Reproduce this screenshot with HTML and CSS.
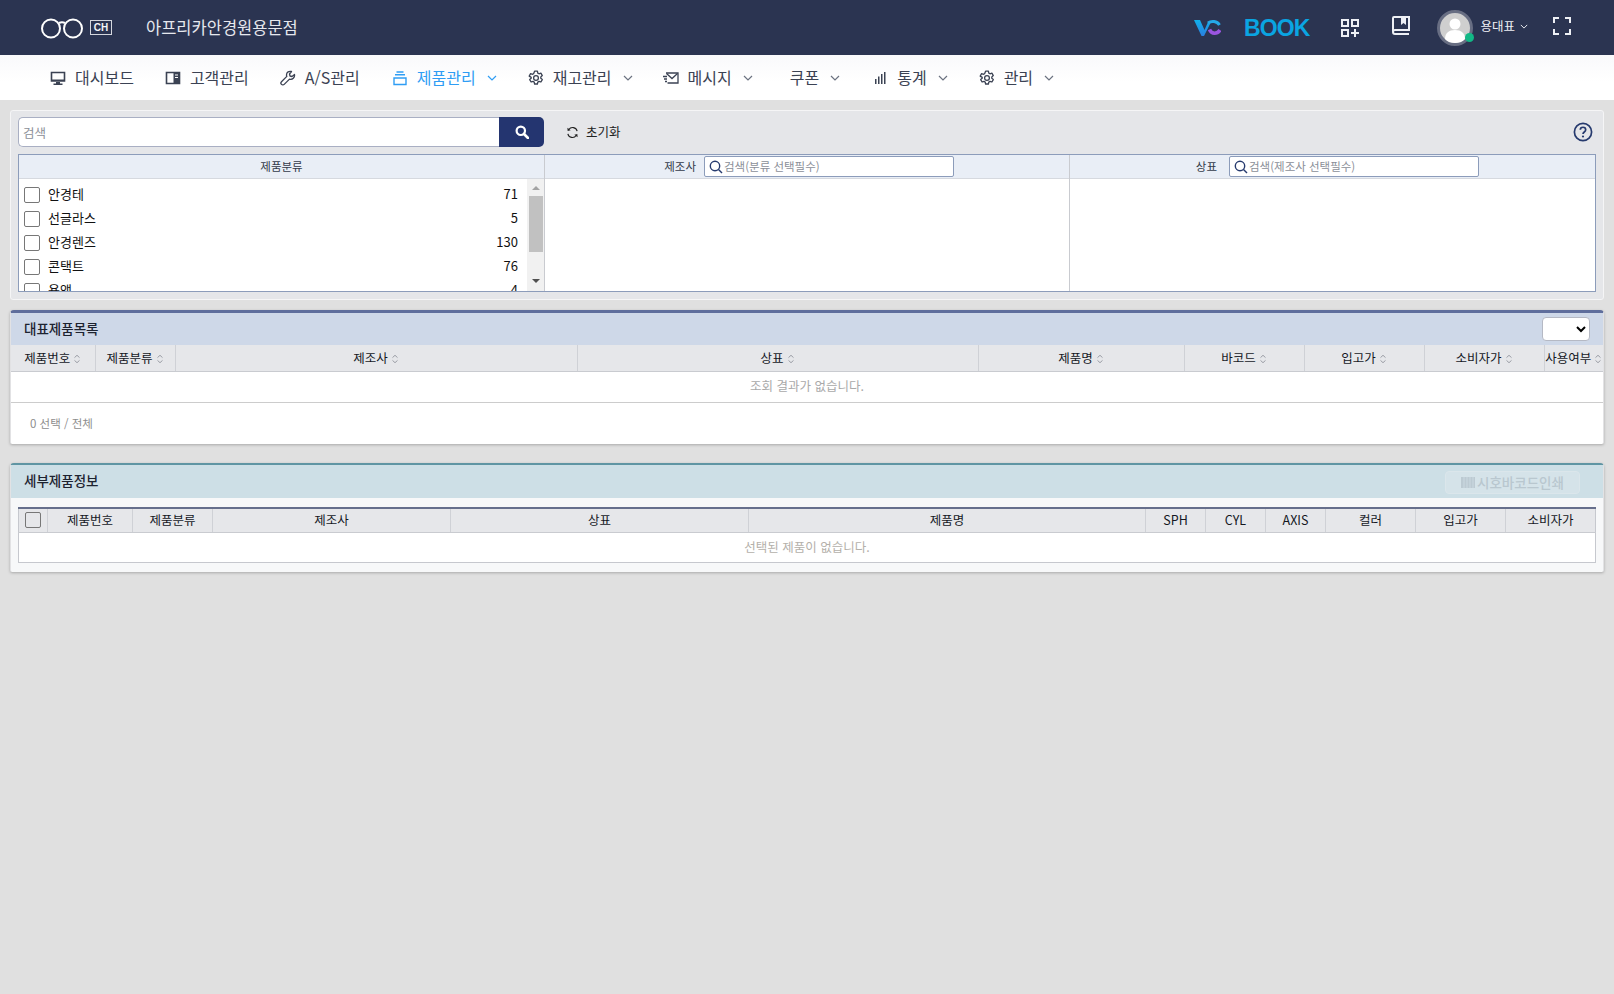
FILE: index.html
```html
<!DOCTYPE html>
<html lang="ko">
<head>
<meta charset="utf-8">
<title>제품관리</title>
<link rel="stylesheet" href="styles.css">
</head>
<body>
<svg class="sprite" aria-hidden="true">
  <symbol id="i-chev" viewBox="0 0 10 6"><path d="M1 1l4 4 4-4" fill="none" stroke="currentColor" stroke-width="1.2"/></symbol>
  <symbol id="i-sort" viewBox="0 0 8 10"><path d="M1.5 3.6L4 1.3l2.5 2.3M1.5 6.4L4 8.7l2.5-2.3" fill="none" stroke="#9a9da5" stroke-width="1"/></symbol>
  <symbol id="i-gear" viewBox="0 0 16 16"><g fill="none" stroke="currentColor" stroke-width="1.3"><path d="M6.6 1.2h2.8l.4 1.9 1.2.7 1.9-.6 1.4 2.4-1.5 1.3v1.4l1.5 1.3-1.4 2.4-1.9-.6-1.2.7-.4 1.9H6.6l-.4-1.9-1.2-.7-1.9.6-1.4-2.4 1.5-1.3V7.4L1.2 6.1l1.4-2.4 1.9.6 1.2-.7z" stroke-linejoin="round"/><circle cx="8" cy="8" r="2.4"/></g></symbol>
</svg>

<header class="topbar">
  <div class="brand">
    <svg class="glasses" viewBox="0 0 44 22"><g fill="none" stroke="#fff" stroke-width="2"><circle cx="11" cy="11.500" r="9"/><circle cx="33" cy="11.500" r="9"/><path d="M19 6q3-1.500 6 0"/></g></svg>
    <span class="ch">CH</span>
    <span class="shop">아프리카안경원용문점</span>
  </div>
  <div class="top-tools">
    <svg class="vc" viewBox="0 0 27 18"><defs><linearGradient id="vcg" x1="0" y1="0" x2="0" y2="1"><stop offset="0" stop-color="#10b0ea"/><stop offset="1" stop-color="#2a7fe0"/></linearGradient></defs><path d="M0 1h6l4.500 10L14 3h3l-7 14H7.500z" fill="url(#vcg)"/><path d="M25.500 6C23 2 17.500 1.500 14 4" fill="none" stroke="#25a9e8" stroke-width="3"/><path d="M15.500 10.500c2 5 8 4.500 10.500.5" fill="none" stroke="#9a55e0" stroke-width="3.500"/></svg>
    <span class="book">BOOK</span>
    <svg class="qr" viewBox="0 0 18 18"><g fill="none" stroke="#eef0f5" stroke-width="2"><rect x="1" y="1" width="6" height="6"/><rect x="11" y="1" width="6" height="6"/><rect x="1" y="11" width="6" height="6"/></g><path d="M13 10h2v3h3v2h-3v3h-2v-3h-3v-2h3z" fill="#eef0f5"/></svg>
    <svg class="manual" viewBox="0 0 18 19"><path d="M1 15.500V2a1 1 0 0 1 1-1h15v13H3a2 2 0 0 0 0 4h14" fill="none" stroke="#eef0f5" stroke-width="2"/><path d="M9 1h5v8l-2.500-2L9 9z" fill="#eef0f5"/></svg>
    <div class="avatar">
      <svg class="avatar-pic" viewBox="0 0 36 36"><circle cx="18" cy="18" r="16.500" fill="#cfcfcf" stroke="#686e83" stroke-width="3"/><circle cx="18" cy="14" r="5.500" fill="#fff"/><path d="M8 29c0-6 4-9 10-9s10 3 10 9c-3 3-6 4-10 4s-7-1-10-4z" fill="#fff"/></svg>
      <span class="status"></span>
    </div>
    <span class="user">용대표</span>
    <svg class="user-chev"><use href="#i-chev"/></svg>
    <svg class="full" viewBox="0 0 18 18"><path d="M1 6V1h5M12 1h5v5M17 12v5h-5M6 17H1v-5" fill="none" stroke="#eef0f5" stroke-width="2"/></svg>
  </div>
</header>

<nav class="menu">
  <a class="item"><svg class="ic" viewBox="0 0 16 16"><path d="M1.500 2.500h13v8.500h-13z" fill="none" stroke="currentColor" stroke-width="1.600"/><path d="M1.500 9.500h13V11h-13zM6 12h4v1.500h2.500V15h-9v-1.500H6z" fill="currentColor"/></svg><span>대시보드</span></a>
  <a class="item"><svg class="ic" viewBox="0 0 16 16"><path d="M1.500 2.500h13v11h-13z" fill="none" stroke="currentColor" stroke-width="1.600"/><path d="M8.500 2.500h6v11h-6z" fill="currentColor"/><path d="M10 5h3M10 7.500h3" stroke="#fff" stroke-width="1.200"/></svg><span>고객관리</span></a>
  <a class="item"><svg class="ic" viewBox="0 0 16 16"><path d="M14.500 4.500l-2.500 2-2-.5-.5-2 2-2.500C9 .8 6.500 2 6.500 5c0 .6.100 1 .3 1.400L1.500 11.700a1.800 1.800 0 0 0 2.700 2.700l5.300-5.300c3 1 5.500-1.500 5-4.600z" fill="none" stroke="currentColor" stroke-width="1.300" stroke-linejoin="round"/></svg><span>A/S관리</span></a>
  <a class="item active"><svg class="ic" viewBox="0 0 16 16"><g fill="none" stroke="currentColor" stroke-width="1.400"><path d="M2 8h12v6.500H2z"/><path d="M3 4.800h10M4.500 2h7"/></g></svg><span>제품관리</span><svg class="chev"><use href="#i-chev"/></svg></a>
  <a class="item"><svg class="ic"><use href="#i-gear"/></svg><span>재고관리</span><svg class="chev"><use href="#i-chev"/></svg></a>
  <a class="item i-msg"><svg class="ic" viewBox="0 0 16 16"><g fill="none" stroke="currentColor" stroke-width="1.300"><path d="M3 3h12v10H4.500"/><path d="M3.500 3.500L9 8.500l5.500-5"/><path d="M0 6.500h4M1 9h3M2 11.500h2"/></g></svg><span>메시지</span><svg class="chev"><use href="#i-chev"/></svg></a>
  <a class="item i-coupon"><span>쿠폰</span><svg class="chev"><use href="#i-chev"/></svg></a>
  <a class="item"><svg class="ic" viewBox="0 0 16 16"><path d="M3 9h1.500v5H3zM6 6.500h1.500V14H6zM9 4h1.500v10H9zM12 2h1.500v12H12z" fill="currentColor"/></svg><span>통계</span><svg class="chev"><use href="#i-chev"/></svg></a>
  <a class="item"><svg class="ic"><use href="#i-gear"/></svg><span>관리</span><svg class="chev"><use href="#i-chev"/></svg></a>
</nav>

<main class="page">
  <section class="filter">
    <div class="search-row">
      <div class="search">
        <input class="search-input" placeholder="검색">
        <button class="search-btn"><svg viewBox="0 0 14 14"><circle cx="5.800" cy="5.800" r="4.200" fill="none" stroke="#fff" stroke-width="2.200"/><path d="M9 9l4 4" stroke="#fff" stroke-width="2.600" stroke-linecap="round"/></svg></button>
      </div>
      <button class="reset"><svg viewBox="0 0 14 14"><g fill="none" stroke="#222" stroke-width="1.200"><path d="M12 5.500A5 5 0 0 0 3 3.800"/><path d="M2 8.500a5 5 0 0 0 9 1.700"/></g><path d="M1.500 1.800l.3 3.500 3.200-.8zM12.500 12.200l-.3-3.500-3.200.8z" fill="#222"/></svg>초기화</button>
      <svg class="help" viewBox="0 0 20 20"><circle cx="10" cy="10" r="8.600" fill="none" stroke="#263a6e" stroke-width="1.700"/><path d="M7.300 7.800c0-3.400 5.400-3.400 5.400 0 0 2.200-2.700 2.200-2.700 4.200" fill="none" stroke="#263a6e" stroke-width="1.700"/><circle cx="10" cy="14.500" r="1.100" fill="#263a6e"/></svg>
    </div>
    <div class="facets">
      <div class="facet">
        <div class="facet-head">제품분류</div>
        <div class="facet-body">
          <ul class="cat-list">
            <li class="cat"><span class="box"></span><span class="cat-name">안경테</span><span class="cat-n">71</span></li>
            <li class="cat"><span class="box"></span><span class="cat-name">선글라스</span><span class="cat-n">5</span></li>
            <li class="cat"><span class="box"></span><span class="cat-name">안경렌즈</span><span class="cat-n">130</span></li>
            <li class="cat"><span class="box"></span><span class="cat-name">콘택트</span><span class="cat-n">76</span></li>
            <li class="cat"><span class="box"></span><span class="cat-name">용액</span><span class="cat-n">4</span></li>
          </ul>
          <div class="scroll">
            <span class="arrow-up"></span>
            <span class="thumb"></span>
            <span class="arrow-down"></span>
          </div>
        </div>
      </div>
      <div class="facet">
        <div class="facet-head facet-search">
          <span>제조사</span>
          <label class="mini"><svg viewBox="0 0 14 14"><circle cx="6" cy="6" r="4.700" fill="none" stroke="#263a6e" stroke-width="1.400"/><path d="M9.500 9.500l3.500 3.500" stroke="#263a6e" stroke-width="1.400"/></svg><input placeholder="검색(분류 선택필수)"></label>
        </div>
        <div class="facet-body"></div>
      </div>
      <div class="facet">
        <div class="facet-head facet-search facet-brand">
          <span>상표</span>
          <label class="mini"><svg viewBox="0 0 14 14"><circle cx="6" cy="6" r="4.700" fill="none" stroke="#263a6e" stroke-width="1.400"/><path d="M9.500 9.500l3.500 3.500" stroke="#263a6e" stroke-width="1.400"/></svg><input placeholder="검색(제조사 선택필수)"></label>
        </div>
        <div class="facet-body"></div>
      </div>
    </div>
  </section>

  <section class="card card-blue">
    <div class="card-head">
      <h2>대표제품목록</h2>
      <select class="pager"><option></option></select>
    </div>
    <table class="grid grid-main">
      <colgroup><col class="m1"><col class="m2"><col class="m3"><col class="m4"><col class="m5"><col class="m6"><col class="m7"><col class="m8"><col></colgroup>
      <thead><tr>
        <th>제품번호<svg class="sort"><use href="#i-sort"/></svg></th>
        <th>제품분류<svg class="sort"><use href="#i-sort"/></svg></th>
        <th>제조사<svg class="sort"><use href="#i-sort"/></svg></th>
        <th>상표<svg class="sort"><use href="#i-sort"/></svg></th>
        <th>제품명<svg class="sort"><use href="#i-sort"/></svg></th>
        <th>바코드<svg class="sort"><use href="#i-sort"/></svg></th>
        <th>입고가<svg class="sort"><use href="#i-sort"/></svg></th>
        <th>소비자가<svg class="sort"><use href="#i-sort"/></svg></th>
        <th>사용여부<svg class="sort"><use href="#i-sort"/></svg></th>
      </tr></thead>
      <tbody><tr><td colspan="9">조회 결과가 없습니다.</td></tr></tbody>
    </table>
    <div class="card-foot">0 선택 / 전체</div>
  </section>

  <section class="card card-teal">
    <div class="card-head">
      <h2>세부제품정보</h2>
      <button class="print" disabled><svg viewBox="0 0 14 11"><path d="M0 0h14v11H0z" fill="#bccad2"/><path d="M3 0v11M6 0v11M9 0v11M12 0v11" stroke="#cfdde4" stroke-width=".8"/></svg>시호바코드인쇄</button>
    </div>
    <div class="detail">
      <table class="grid grid-detail">
        <colgroup><col class="d1"><col class="d2"><col class="d3"><col class="d4"><col class="d5"><col class="d6"><col class="d7"><col class="d8"><col class="d9"><col class="d10"><col class="d11"><col></colgroup>
        <thead><tr>
          <th><span class="box box-head"></span></th>
          <th>제품번호</th><th>제품분류</th><th>제조사</th><th>상표</th><th>제품명</th><th>SPH</th><th>CYL</th><th>AXIS</th><th>컬러</th><th>입고가</th><th>소비자가</th>
        </tr></thead>
        <tbody><tr><td colspan="12">선택된 제품이 없습니다.</td></tr></tbody>
      </table>
    </div>
  </section>
</main>
</body>
</html>
```

FILE: styles.css
```css
* { box-sizing: border-box; }
html, body { margin: 0; padding: 0; }
body {
  min-height: 994px;
  background: #e0e0e0;
  font-family: "Noto Sans CJK KR", "Noto Sans", sans-serif;
  color: #222;
}
.sprite { display: none; }

/* top bar */
.topbar {
  height: 55px;
  background: #2b3451;
  display: flex;
  align-items: center;
  justify-content: space-between;
  color: #fff;
}
.brand { display: flex; align-items: center; padding-left: 40px; }
.glasses { width: 44px; height: 22px; display: block; }
.ch {
  margin-left: 6px;
  width: 22px;
  height: 15px;
  border: 1px solid #d5d7de;
  font: 700 10px/13px "Liberation Sans", sans-serif;
  text-align: center;
  color: #f4f5f8;
}
.shop { margin-left: 34px; padding-bottom: 2px; font-size: 16.5px; line-height: 24px; color: #e6e8ee; }
.top-tools { display: flex; align-items: center; height: 55px; padding-right: 43px; }
.vc { width: 27px; height: 18px; display: block; }
.book {
  margin-left: 23px;
  font: 700 23px/24px "Liberation Sans", sans-serif;
  letter-spacing: -.9px;
  color: #0aa5e2;
}
.qr { margin-left: 32px; width: 18px; height: 18px; display: block; }
.manual { margin-left: 33px; width: 18px; height: 19px; display: block; margin-top: -4px; }
.avatar { position: relative; margin-left: 27px; width: 36px; height: 36px; }
.avatar-pic { width: 36px; height: 36px; display: block; }
.status {
  position: absolute;
  right: -1px;
  bottom: 4px;
  width: 9px;
  height: 9px;
  border-radius: 50%;
  background: #12b886;
}
.user { margin-left: 7px; font-size: 12.5px; line-height: 18px; color: #eef0f5; margin-top: -3px; }
.user-chev { margin-left: 5px; width: 8px; height: 5px; color: #eef0f5; margin-top: -3px; }
.full { margin-left: 25px; width: 18px; height: 18px; display: block; margin-top: -3px; }

/* menu */
.menu {
  height: 45px;
  background: linear-gradient(#f9f9fb, #fff 60%);
  display: flex;
  align-items: center;
  gap: 31px;
  padding-left: 50px;
}
.item {
  display: flex;
  align-items: center;
  gap: 9px;
  font-size: 16px;
  line-height: 24px;
  color: #3b4253;
}
.item span { padding-bottom: 2px; }
.item .ic { width: 16px; height: 16px; flex: none; }
.item .chev { width: 10px; height: 6px; margin-left: 2px; color: #6b7280; }
.item.active { margin-left: 1px; }
.item.active, .item.active .chev { color: #2f9df4; }
.i-msg { margin-left: -1px; }
.i-coupon { margin-left: 6px; margin-right: 1px; }

/* filter panel */
.page { padding: 10px 10px 0; }
.filter {
  height: 190px;
  padding: 6px 7px 8px 7px;
  background: #e5e6e9;
  border: 1px solid #f5f5f6;
  border-radius: 3px;
  display: flex;
  flex-direction: column;
  gap: 7px;
}
.search-row { display: flex; align-items: center; height: 30px; }
.search { display: flex; width: 526px; height: 30px; }
.search-input {
  flex: 1;
  min-width: 0;
  height: 30px;
  border: 1px solid #a9afc3;
  border-right: 0;
  border-radius: 5px 0 0 5px;
  padding: 0 4px;
  font: 12.5px "Noto Sans CJK KR", sans-serif;
  background: #fff;
}
input::placeholder { color: #8b8f98; opacity: 1; }
.search-btn {
  width: 45px;
  border: 0;
  padding: 0;
  background: #243570;
  border-radius: 0 5px 5px 0;
  display: flex;
  align-items: center;
  justify-content: center;
}
.search-btn svg { width: 14px; height: 14px; }
.reset {
  margin-left: 22px;
  display: flex;
  align-items: center;
  gap: 7px;
  border: 0;
  background: none;
  padding: 0;
  font: 12.5px/18px "Noto Sans CJK KR", sans-serif;
  color: #222;
}
.reset svg { width: 13px; height: 13px; }
.help { margin-left: auto; margin-right: 3px; width: 20px; height: 20px; }

.facets {
  height: 138px;
  display: grid;
  grid-template-columns: 525px 525px 1fr;
  grid-template-rows: minmax(0, 1fr);
  border: 1px solid #8c9cba;
  background: #fff;
}
.facet { display: flex; flex-direction: column; min-width: 0; min-height: 0; overflow: hidden; }
.facet + .facet { border-left: 1px solid #c9cbd0; }
.facet-head {
  height: 24px;
  flex: none;
  background: #e9eef6;
  border-bottom: 1px solid #d6d9df;
  font-size: 11.5px;
  line-height: 23px;
  text-align: center;
  color: #333b4a;
}
.facet-search {
  display: flex;
  align-items: center;
  justify-content: flex-end;
  gap: 8px;
  padding-right: 115px;
}
.facet-brand { gap: 12px; padding-right: 116px; }
.mini {
  width: 250px;
  height: 21px;
  display: flex;
  align-items: center;
  gap: 1px;
  padding-left: 4px;
  border: 1px solid #8c9cba;
  border-radius: 2px;
  background: #fff;
}
.mini svg { width: 14px; height: 14px; flex: none; }
.mini input {
  flex: 1;
  min-width: 0;
  border: 0;
  padding: 0;
  outline: 0;
  font: 11.5px/17px "Noto Sans CJK KR", sans-serif;
}
.facet-body { flex: 1; display: flex; min-height: 0; overflow: hidden; }
.cat-list { flex: 1; margin: 0; padding: 4px 0 0 5px; list-style: none; overflow: hidden; }
.cat { display: flex; align-items: center; height: 24px; }
.box {
  width: 16px;
  height: 16px;
  border: 1px solid #777;
  border-radius: 2px;
  background: #fff;
  flex: none;
}
.cat-name { margin-left: 8px; flex: 1; padding-bottom: 2px; font-size: 13px; line-height: 20px; color: #111; }
.cat-n { margin-right: 9px; padding-bottom: 3px; font-size: 13px; line-height: 20px; color: #111; }
.scroll {
  width: 17px;
  flex: none;
  background: #f1f1f1;
  display: flex;
  flex-direction: column;
  align-items: center;
  padding-top: 7px;
}
.arrow-up, .arrow-down { width: 0; height: 0; border: 4px solid transparent; border-top: 0; border-bottom: 4px solid #a3a3a3; }
.arrow-down { border-top: 4px solid #505050; border-bottom: 0; margin-top: 27px; }
.thumb { width: 14px; height: 56px; background: #c1c1c1; margin-top: 6px; }

/* cards */
.card {
  margin-top: 10px;
  background: #fff;
  border-left: 1px solid #e2e2e4;
  border-right: 1px solid #e2e2e4;
  border-radius: 4px 4px 2px 2px;
  box-shadow: 0 1px 3px rgba(0,0,0,.25);
}
.card-blue { border-top: 3px solid #5f6e9c; }
.card-teal {
  margin-top: 19px;
  border-top: 2px solid #5f95a3;
  background: #f7f8f9;
  padding-bottom: 9px;
}
.card-head {
  display: flex;
  align-items: center;
  justify-content: space-between;
  padding: 0 13px;
}
.card-blue .card-head { height: 32px; background: #ced8e8; }
.card-teal .card-head { height: 33px; background: #cddfe6; padding-right: 23px; }
.card-head h2 { margin: 0; padding-bottom: 2px; font-size: 13.5px; line-height: 20px; font-weight: 500; color: #1d2330; }
.pager {
  width: 48px;
  height: 24px;
  border: 1px solid #b5b9c4;
  border-radius: 4px;
  background: #fff;
}
.print {
  width: 135px;
  height: 23px;
  margin-top: 2px;
  border: 1px solid #dbe6eb;
  border-radius: 4px;
  background: #d5e3e9;
  display: flex;
  align-items: center;
  justify-content: center;
  gap: 2px;
  padding: 0;
  font: 500 13.5px/18px "Noto Sans CJK KR", sans-serif;
  color: #b9c7cf;
}
.print svg { width: 14px; height: 11px; }

.grid { width: 100%; border-collapse: collapse; table-layout: fixed; background: #fff; }
.grid th {
  height: 26px;
  padding: 0;
  background: #e6e7ea;
  border-left: 1px solid #cfd1d6;
  border-bottom: 1px solid #c9cbd0;
  font-size: 12.5px;
  line-height: 18px;
  font-weight: 400;
  color: #15181f;
  white-space: nowrap;
}
.grid th:first-child { border-left: 0; }
.grid td {
  padding: 0 0 2px;
  text-align: center;
  font-size: 12.5px;
  color: #a9a9a9;
}
.sort { width: 8px; height: 10px; margin-left: 3px; vertical-align: -1px; }
.m1 { width: 84px; } .m2 { width: 80px; } .m3 { width: 402px; } .m4 { width: 401px; }
.m5 { width: 206px; } .m6 { width: 120px; } .m7 { width: 120px; } .m8 { width: 120px; }
.grid-main td { height: 31px; border-bottom: 1px solid #ccc; }
.card-foot { height: 41px; padding-left: 19px; font-size: 11.5px; line-height: 41px; color: #8d8d8d; }

.detail { padding: 9px 7px 0; }
.grid-detail { border: 1px solid #c6c8ce; border-top: 2px solid #666f8c; }
.grid-detail th { height: 25px; }
.grid-detail td { height: 30px; color: #b4b0aa; }
.box-head { display: block; margin: 0 auto; background: transparent; }
.d1 { width: 29px; } .d2 { width: 85px; } .d3 { width: 80px; } .d4 { width: 238px; }
.d5 { width: 298px; } .d6 { width: 397px; } .d7 { width: 60px; } .d8 { width: 60px; }
.d9 { width: 60px; } .d10 { width: 90px; } .d11 { width: 90px; }
```
